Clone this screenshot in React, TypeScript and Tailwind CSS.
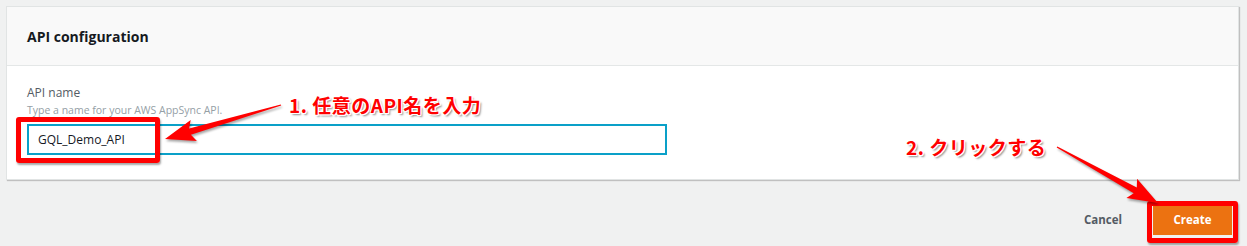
import React from 'react'

type Pt = [number, number]

// tapered arrow polygon from tail to tip
function arrowPoints(tail: Pt, tip: Pt, headLen = 26, headHalf = 11, w0 = 0.6, w1 = 3.2) {
  const dx = tip[0] - tail[0]
  const dy = tip[1] - tail[1]
  const len = Math.hypot(dx, dy)
  const ux = dx / len
  const uy = dy / len
  const nx = -uy
  const ny = ux
  const bx = tip[0] - ux * headLen
  const by = tip[1] - uy * headLen
  const pts: Pt[] = [
    [tail[0] + nx * w0, tail[1] + ny * w0],
    [bx + nx * w1, by + ny * w1],
    [bx + nx * headHalf - ux * 4, by + ny * headHalf - uy * 4],
    tip,
    [bx - nx * headHalf - ux * 4, by - ny * headHalf - uy * 4],
    [bx - nx * w1, by - ny * w1],
    [tail[0] - nx * w0, tail[1] - ny * w0],
  ]
  return pts.map(p => `${p[0].toFixed(1)},${p[1].toFixed(1)}`).join(' ')
}

const NOTE =
  'absolute font-bold text-[19px] leading-none text-[#ff0000] tracking-[0.5px] [font-family:"Noto_Sans_CJK_JP","Noto_Sans",sans-serif] [text-shadow:1px_1px_0_#fff,-1px_-1px_0_#fff,1px_-1px_0_#fff,-1px_1px_0_#fff,0_1px_0_#fff,1px_0_0_#fff,2px_2px_2px_rgba(0,0,0,0.45)]'

export default function App() {
  return (
    <div className="relative w-[1247px] h-[246px] overflow-hidden bg-[#f0f1f1] p-[6px] [font-family:'Open_Sans','Liberation_Sans',sans-serif]">
      <div className="mr-[2px] bg-white border border-[#e1e4e4] shadow-[1px_1px_1px_rgba(0,0,0,0.2)]">
        <div className="h-[59px] bg-[#f9f9f9] border-b border-[#e4e7e7] px-[20px] flex items-center">
          <h2 className="text-[14px] font-bold text-[#16191f]">API configuration</h2>
        </div>
        <div className="px-[20px] pt-[19px] pb-[24px]">
          <div className="text-[12px] leading-[16px] text-[#545b64]">API name</div>
          <div className="text-[10.5px] leading-[14px] mt-[2px] text-[#95a0a6]">
            Type a name for your AWS AppSync API.
          </div>
          <div className="mt-[7px] w-[640px] h-[31px] border-2 border-[#0aa0c8] flex items-center px-[9px]">
            <span className="text-[12px] text-[#16191f]">GQL_Demo_API</span>
          </div>
        </div>
      </div>

      <div className="flex justify-end items-center mt-[25px] mr-[9px]">
        <button className="text-[11.5px] font-bold text-[#545b64] mr-[31px]">Cancel</button>
        <button className="w-[79px] h-[30px] bg-[#ec7211] text-white text-[11.5px] font-bold">Create</button>
      </div>

      {/* annotations */}
      <div className="absolute left-[16px] top-[117px] w-[144px] h-[46px] border-[5px] border-[#ff0000] rounded-[3px] shadow-[1px_2px_2px_rgba(0,0,0,0.35)]" />
      <div className="absolute left-[1147px] top-[201px] w-[91px] h-[42px] border-[5px] border-[#ff0000] rounded-[3px] shadow-[1px_2px_2px_rgba(0,0,0,0.35)]" />

      <svg className="absolute left-0 top-0" width="1247" height="246" viewBox="0 0 1247 246">
        <g fill="#ff0000" style={{ filter: 'drop-shadow(1px 2px 1px rgba(0,0,0,0.35))' }}>
          <polygon points={arrowPoints([281, 105], [165, 139])} />
          <polygon points={arrowPoints([1057, 147], [1158, 203])} />
        </g>
      </svg>

      <div className={`${NOTE} left-[289px] top-[95px]`}>1. 任意のAPI名を入力</div>
      <div className={`${NOTE} left-[906px] top-[137px]`}>2. クリックする</div>
    </div>
  )
}
